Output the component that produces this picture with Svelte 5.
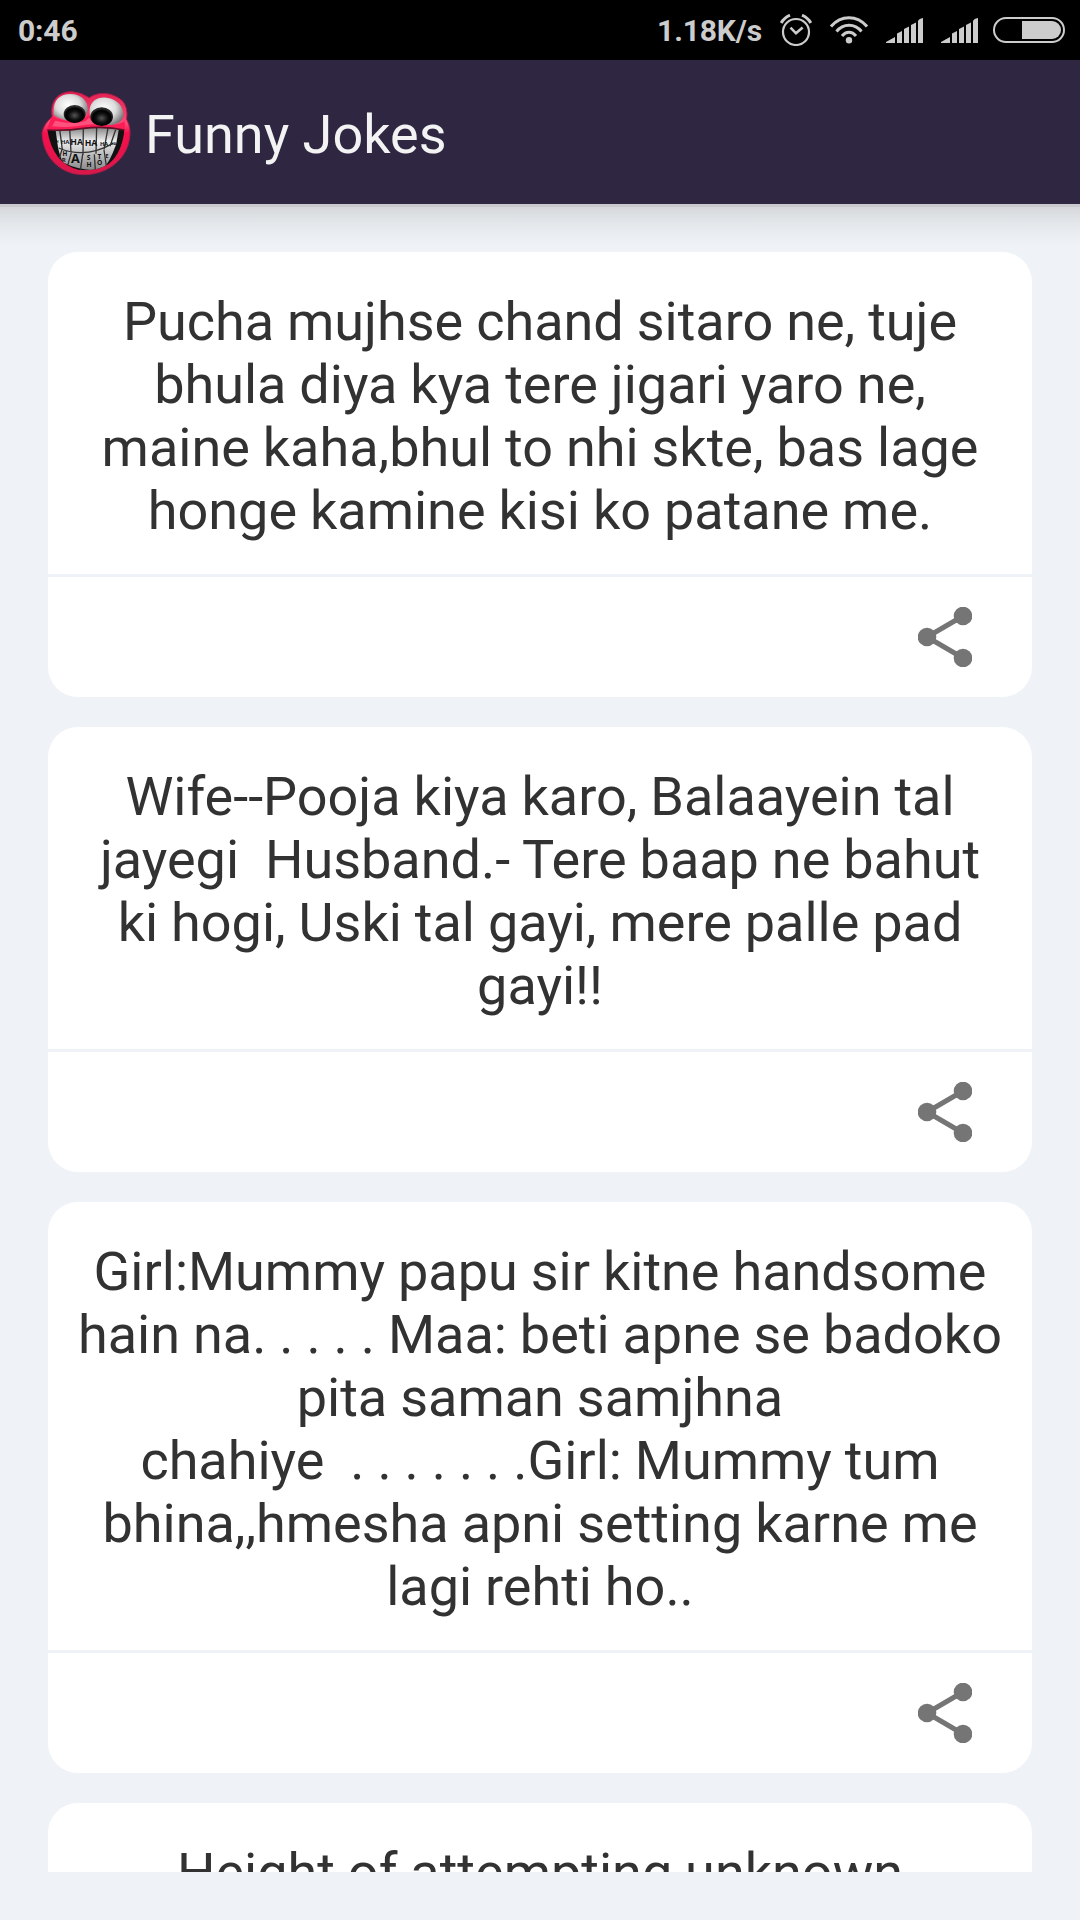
<script lang="ts">
	const jokes: string[][] = [
		[
			"Pucha mujhse chand sitaro ne, tuje",
			"bhula diya kya tere jigari yaro ne,",
			"maine kaha,bhul to nhi skte, bas lage",
			"honge kamine kisi ko patane me.",
		],
		[
			"Wife--Pooja kiya karo, Balaayein tal",
			"jayegi  Husband.- Tere baap ne bahut",
			"ki hogi, Uski tal gayi, mere palle pad",
			"gayi!!",
		],
		[
			"Girl:Mummy papu sir kitne handsome",
			"hain na. . . . . Maa: beti apne se badoko",
			"pita saman samjhna",
			"chahiye  . . . . . . .Girl: Mummy tum",
			"bhina,,hmesha apni setting karne me",
			"lagi rehti ho..",
		],
		["Height of attempting unknown"],
	];
</script>

{#snippet signal()}
	<svg class="signal" width="37" height="25" viewBox="0 0 37 25" fill="#ccc">
		<path d="M0 25V24L9 19V25Z" />
		<path d="M11 25V15.5L16 13V25Z" />
		<path d="M18 25V11L23 8.500V25Z" />
		<path d="M25 25V7L30 4.500V25Z" />
		<path d="M32 25V3Q33 .5 37 0V25Z" />
	</svg>
{/snippet}

<div class="screen">
	<div class="status">
		<span class="clock">0:46</span>
		<span class="speed">1.18K/s</span>
		<svg class="alarm" width="32" height="32" viewBox="0 0 32 32" fill="none" stroke="#ccc">
			<circle cx="16" cy="18" r="13" stroke-width="2.200" />
			<path d="M10.500 13.700L16 19.300L22.600 13.500" stroke-width="2.600" />
			<path d="M1.200 9Q4 3.800 10 1.200M30.800 9Q28 3.800 22 1.200" stroke-width="3" />
		</svg>
		<svg class="wifi" width="38" height="28" viewBox="0 0 38 28" fill="none" stroke="#ccc" stroke-width="3">
			<path d="M1 10.500Q8.500 1.800 19 1.800T37 10.500" />
			<path d="M6.500 15.500Q11.500 9.300 19 9.300T31.500 15.500" />
			<path d="M12 20Q15 16.300 19 16.300T26 20" />
			<circle cx="19" cy="24.300" r="3.200" fill="#ccc" stroke="none" />
		</svg>
		{@render signal()}
		{@render signal()}
		<svg class="battery" width="72" height="26" viewBox="0 0 72 26">
			<rect x="1" y="1" width="70" height="24" rx="12" fill="none" stroke="#ccc" stroke-width="2" />
			<path d="M29 4H59A9 9 0 0 1 59 22H29Z" fill="#ccc" />
		</svg>
	</div>

	<header class="bar">
		<svg class="logo" width="92" height="92" viewBox="30 18 276 276">
			<defs>
				<radialGradient id="eye" cx=".42" cy=".4" r=".65">
					<stop offset="0" stop-color="#fff" />
					<stop offset=".55" stop-color="#dcdcdc" />
					<stop offset="1" stop-color="#707070" />
				</radialGradient>
				<radialGradient id="pupil" cy=".58">
					<stop offset="0" stop-color="#555" />
					<stop offset=".5" stop-color="#111" />
					<stop offset=".8" stop-color="#000" />
					<stop offset="1" stop-color="#2a2a2a" />
				</radialGradient>
				<linearGradient id="skin" x2="0" y2="1">
					<stop offset="0" stop-color="#e02050" />
					<stop offset=".38" stop-color="#ff4a78" />
					<stop offset=".5" stop-color="#f5104c" />
					<stop offset="1" stop-color="#d8184a" />
				</linearGradient>
				<linearGradient id="teeth" x2="0" y2="1">
					<stop offset="0" stop-color="#777" />
					<stop offset=".35" stop-color="#f0f0f0" />
					<stop offset=".6" stop-color="#c4c4c4" />
					<stop offset="1" stop-color="#8a8a8a" />
				</linearGradient>
				<clipPath id="mouth">
					<path d="M52 150Q110 153 160 145Q225 137 283 150Q276 220 235 253Q195 276 145 269Q68 250 52 150Z" />
				</clipPath>
			</defs>
			<path
				d="M67 110C58 63 86 34 126 35Q154 37 178 53C207 32 250 38 277 62Q295 82 290 118Q305 145 298 180C286 246 222 286 158 284C87 283 38 227 36 160Q40 132 67 110Z"
				fill="url(#skin)"
				stroke="#a61c49"
				stroke-width="3"
			/>
			<path d="M71 94C70 59 91 42 121 42C154 42 174 63 174 89Q168 117 137 124Q91 121 71 104Z" fill="url(#eye)" />
			<path d="M179 87C182 62 204 49 230 53C264 57 283 82 280 111Q269 137 229 137Q185 128 179 101Z" fill="url(#eye)" />
			<path d="M66 108Q93 124 134 123Q162 120 176 105Q188 124 218 132Q256 141 284 124L285 151Q220 136 160 145Q110 153 50 149Z" fill="#fa1d56" />
			<path d="M76 122Q120 134 156 126Q170 123 177 113Q186 126 204 133Q175 131 145 138Q104 144 66 139Z" fill="#ff7da0" opacity=".55" />
			<ellipse cx="134" cy="102" rx="33" ry="27" fill="url(#pupil)" />
			<ellipse cx="215" cy="110" rx="34" ry="28" fill="url(#pupil)" />
			<g clip-path="url(#mouth)">
				<path d="M45 135H290V280H45Z" fill="#111" />
				<path d="M76 145Q165 130 267 145L258 194Q238 249 220 265Q165 280 98 247Q87 220 84 202Z" fill="url(#teeth)" />
				<path d="M86 204Q165 238 249 190" fill="none" stroke="#333" stroke-width="4" />
				<path
					d="M89 148L97 208M119 145L123 217M160 140L159 224M200 140L198 221M234 144L222 209M257 149L240 199M96 208L87 239M124 218L113 256M158 223L151 272M193 223L196 270M222 210L229 258"
					fill="none"
					stroke="#333"
					stroke-width="4"
				/>
			</g>
			<path d="M52 150Q110 153 160 145Q225 137 283 150" fill="none" stroke="#650f27" stroke-width="5" />
			<g class="letters">
				<text x="105" y="193" font-size="18">HA</text>
				<text x="140" y="196" font-size="26">HA</text>
				<text x="183" y="199" font-size="26">HA</text>
				<text x="222" y="197" font-size="17">HA</text>
				<text x="251" y="194" font-size="10">HA</text>
				<text x="82" y="190" font-size="10">H</text>
				<text x="105" y="228" font-size="19">H</text>
				<text x="101" y="246" font-size="18">R</text>
				<text x="136" y="250" font-size="38">A</text>
				<text x="176" y="241" font-size="20">S</text>
				<text x="177" y="260" font-size="20">H</text>
				<text x="208" y="236" font-size="20">T</text>
				<text x="209" y="255" font-size="20">O</text>
				<text x="231" y="233" font-size="16">E</text>
			</g>
		</svg>
		<h1>Funny Jokes</h1>
	</header>

	<main class="list">
		{#each jokes as lines}
			<article class="card">
				<p>{lines.join("\n")}</p>
				<div class="actions">
					<svg width="54" height="60" viewBox="0 0 54 60" fill="#757575">
						<path d="M45 9L9 30L45 51" fill="none" stroke="#757575" stroke-width="5" />
						<circle cx="9" cy="30" r="9.300" />
						<circle cx="45" cy="9" r="9.300" />
						<circle cx="45" cy="51" r="9.300" />
					</svg>
				</div>
			</article>
		{/each}
	</main>
</div>

<style>
	:global(body) {
		margin: 0;
		background: #eff3f8;
	}
	.screen {
		width: 1080px;
		height: 1920px;
		overflow: hidden;
		display: flex;
		flex-direction: column;
		font-family: Roboto, sans-serif;
		background: #eff3f8;
	}
	svg {
		display: block;
		flex: none;
	}
	.status {
		height: 60px;
		flex: none;
		box-sizing: border-box;
		padding: 0 15px 0 18px;
		display: flex;
		align-items: center;
		background: #000;
		color: #ccc;
		font-size: 30px;
		font-weight: 700;
		line-height: 60px;
		letter-spacing: -0.15px;
	}
	.status span {
		padding-top: 1px;
	}
	.clock {
		margin-right: auto;
	}
	.speed {
		margin-right: 18px;
	}
	.alarm {
		margin-right: 18px;
	}
	.wifi {
		margin-right: 18px;
	}
	.signal {
		margin-right: 18px;
	}
	.signal + .signal {
		margin-right: 15px;
	}
	.bar {
		height: 144px;
		flex: none;
		display: flex;
		align-items: center;
		gap: 13px;
		padding-left: 40px;
		background: #2f2641;
	}
	h1 {
		margin: 0;
		padding-top: 4px;
		color: #f3f3f3;
		font-size: 54px;
		font-weight: 400;
		line-height: 63px;
	}
	.letters {
		fill: #111;
		font-family: "Open Sans", sans-serif;
		font-weight: 700;
		text-anchor: middle;
	}
	.list {
		height: 1668px;
		flex: none;
		box-sizing: border-box;
		overflow: hidden;
		padding: 48px 48px 0;
		display: flex;
		flex-direction: column;
		gap: 30px;
		background: linear-gradient(#c8cacd 0, #c8cacd 3px, #d6d7db 3px, #dfe3e6 14px, #e8ebef 27px, #eff3f8 42px);
	}
	.card {
		flex: none;
		border-radius: 30px;
		background: #fff;
	}
	.card p {
		margin: 0;
		padding: 38px 0 32px;
		color: #323232;
		font-size: 54px;
		line-height: 63px;
		letter-spacing: -0.01px;
		word-spacing: -0.45px;
		text-align: center;
		white-space: pre;
	}
	.actions {
		height: 120px;
		border-top: 3px solid #eff3f8;
		padding-right: 60px;
		display: flex;
		align-items: center;
		justify-content: flex-end;
	}
</style>
